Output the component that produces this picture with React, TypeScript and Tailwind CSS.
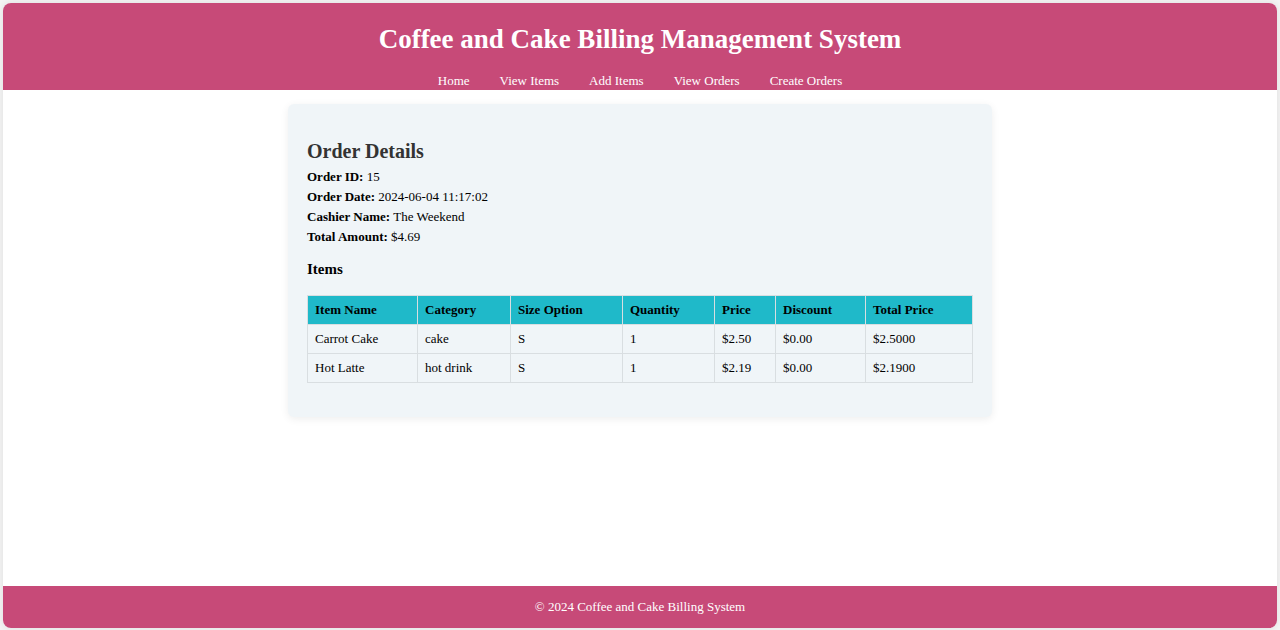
import React from "react";

const links = ["Home", "View Items", "Add Items", "View Orders", "Create Orders"];

const details = [
  ["Order ID:", "15"],
  ["Order Date:", "2024-06-04 11:17:02"],
  ["Cashier Name:", "The Weekend"],
  ["Total Amount:", "$4.69"],
];

const columns = [
  { title: "Item Name", width: "w-[110px]" },
  { title: "Category", width: "w-[93px]" },
  { title: "Size Option", width: "w-[112px]" },
  { title: "Quantity", width: "w-[92px]" },
  { title: "Price", width: "w-[61px]" },
  { title: "Discount", width: "w-[90px]" },
  { title: "Total Price", width: "w-[107px]" },
];

const items = [
  ["Carrot Cake", "cake", "S", "1", "$2.50", "$0.00", "$2.5000"],
  ["Hot Latte", "hot drink", "S", "1", "$2.19", "$0.00", "$2.1900"],
];

export default function App() {
  return (
    <div className="min-h-screen bg-[#f5f5f5] px-[3px] pt-[3px] pb-[2px] flex flex-col font-['Liberation_Serif',serif] text-[13px] leading-5 text-black">
      <div className="grow flex flex-col overflow-hidden rounded-lg bg-white shadow-[0_0_8px_rgba(0,0,0,0.1)]">
        <header className="bg-[#c74a78] pt-5 text-center text-white">
          <h1 className="text-[27px] leading-8 font-bold">Coffee and Cake Billing Management System</h1>
          <nav className="mt-4 flex justify-center gap-[30px] leading-[19px]">
            {links.map((link) => (
              <a key={link} href="#">{link}</a>
            ))}
          </nav>
        </header>
        <main className="grow px-4 pt-[14px] pb-4">
          <section className="mx-auto max-w-[704px] rounded-md bg-[#f0f5f8] px-[19px] pt-[35px] pb-[34px] shadow-[0_2px_8px_rgba(0,0,0,0.07)]">
            <h2 className="text-xl leading-6 font-bold text-[#333333]">Order Details</h2>
            <div className="mt-1">
              {details.map(([label, value]) => (
                <p key={label}>
                  <strong>{label}</strong> {value}
                </p>
              ))}
            </div>
            <h3 className="mt-3 text-[15px] leading-5 font-bold">Items</h3>
            <table className="mt-4 w-full table-fixed border-collapse border border-[#d3d7da] text-left">
              <thead className="bg-[#1fb9c9]">
                <tr>
                  {columns.map(({ title, width }) => (
                    <th key={title} className={`${width} border border-[#d9dee1] px-[7px] py-1 font-bold`}>{title}</th>
                  ))}
                </tr>
              </thead>
              <tbody>
                {items.map((row) => (
                  <tr key={row[0]}>
                    {row.map((cell, i) => (
                      <td key={columns[i].title} className="border border-[#d9dee1] px-[7px] py-1">{cell}</td>
                    ))}
                  </tr>
                ))}
              </tbody>
            </table>
          </section>
        </main>
        <footer className="bg-[#c74a78] py-[11px] text-center text-white">© 2024 Coffee and Cake Billing System</footer>
      </div>
    </div>
  );
}
